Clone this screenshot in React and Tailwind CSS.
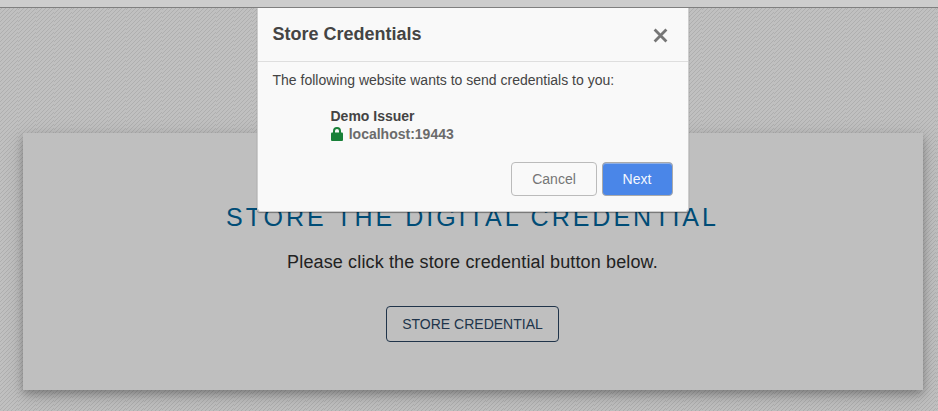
import React from 'react';

function Lock() {
  return (
    <svg width="12" height="14" viewBox="0 0 12 14" className="block">
      <path d="M3 6V4a3 3 0 0 1 6 0v2" fill="none" stroke="#188038" strokeWidth="2" />
      <rect x="0" y="5.6" width="12" height="8.4" rx="1" fill="#188038" />
    </svg>
  );
}

function Dialog() {
  return (
    <div role="dialog" className="absolute left-[257px] top-2 flex h-[204px] w-[432px] flex-col rounded-b-[3px] border border-t-0 border-[#cdcdcd] bg-[#f9f9f9] bg-clip-padding text-[#444] shadow-[0_1px_1px_rgba(0,0,0,0.4)]">
      <header className="flex h-[54px] shrink-0 items-center justify-between border-b border-[#dedede] pr-[20px] pl-[14.5px]">
        <h2 className="-mt-px text-[18px] leading-[23px] font-bold text-[#444]">Store Credentials</h2>
        <button aria-label="Close" className="mt-px">
          <svg width="15" height="15" viewBox="0 0 15 15" className="block">
            <path d="M1.6 1.6l11.8 11.8M13.4 1.6L1.6 13.4" stroke="#767676" strokeWidth="2.8" />
          </svg>
        </button>
      </header>
      <p className="mt-[9px] pl-[14.5px] text-[14px] leading-[18px] whitespace-nowrap">The following website wants to send credentials to you:</p>
      <div className="mt-[18px] pl-[72.5px] text-[14px] leading-[18px] font-bold">
        <div>Demo Issuer</div>
        <div className="flex items-center gap-[6.2px] text-[#6b6b6b]">
          <Lock />
          <span>localhost:19443</span>
        </div>
      </div>
      <div className="mt-[19px] flex justify-end gap-[5px] pr-[15px] text-[14px]">
        <button className="h-[34px] w-[86px] rounded-[4px] border border-[#bbb] text-[#757575]">Cancel</button>
        <button className="h-[34px] w-[71px] rounded-[4px] border border-[#aaa] bg-[#4a86e8] pr-px text-[#f5f8fe] shadow-[inset_0_1px_0_#8fafe4]">Next</button>
      </div>
    </div>
  );
}

export default function App() {
  return (
    <div className="relative h-[411px] w-[938px] overflow-hidden bg-[#c0c0c0] bg-[repeating-linear-gradient(135deg,#c0c0c0_0px,#c0c0c0_1.06px,#afafaf_1.07px,#afafaf_1.76px,#c0c0c0_1.77px,#c0c0c0_2.8284px)] bg-[length:18px_112px] font-['Liberation_Sans',Arial,sans-serif]">
      <div className="h-2 border-b border-[#7f7f7f] bg-[#cdcdcd]" />
      <main className="mt-[125px] ml-[23px] flex h-[257px] w-[900px] flex-col items-center bg-[#bfbfbf] pr-px shadow-[0_4px_8px_rgba(0,0,0,0.25),0_6px_20px_rgba(0,0,0,0.15)]">
        <h1 className="mt-[68px] text-[25px] leading-[32px] tracking-[3px] whitespace-nowrap text-[#004c76]">STORE THE DIGITAL CREDENTIAL</h1>
        <p className="mt-[16px] text-[18px] leading-[26px] tracking-[0.14px] text-[#222]">Please click the store credential button below.</p>
        <button className="mt-[31px] h-[36px] w-[173px] rounded-[4px] border border-[#20344a] text-[14px] text-[#20344a]">STORE CREDENTIAL</button>
      </main>
      <Dialog />
    </div>
  );
}
